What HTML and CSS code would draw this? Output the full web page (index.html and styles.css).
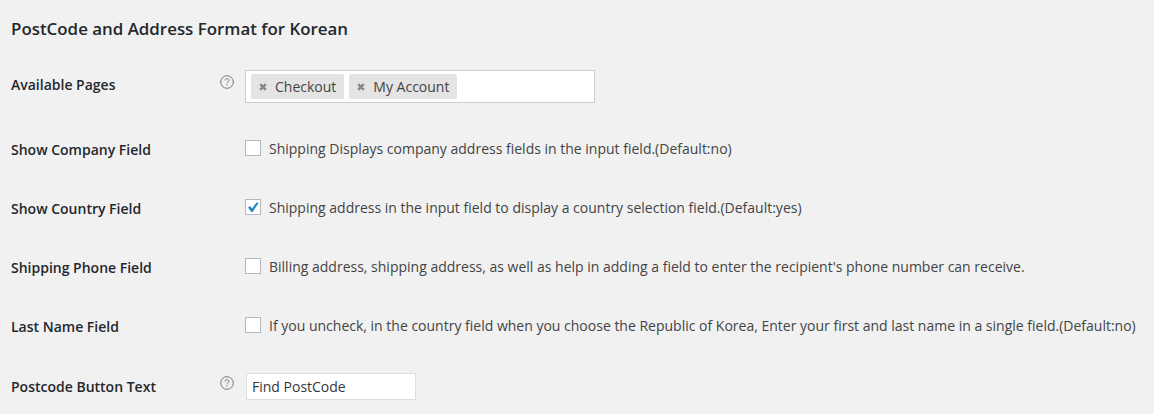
FILE: index.html
```
<!DOCTYPE html>
<html lang="en">
<head>
<meta charset="utf-8">
<title>PostCode and Address Format for Korean</title>
<link rel="stylesheet" href="styles.css">
</head>
<body>
<main class="settings">
  <h3 class="title">PostCode and Address Format for Korean</h3>
  <div class="row row-pages">
    <span class="label">Available Pages</span>
    <svg class="help" viewBox="0 0 14 14"><circle cx="7" cy="7" r="6.3"/><path d="M5 5.6C5 4.3 5.9 3.7 7 3.7s2 .6 2 1.7c0 1.3-2 1.5-2 2.9M7 9.4v1.2"/></svg>
    <div class="select">
      <span class="chip"><svg class="remove" viewBox="0 0 8 8"><path d="M1.2 1.2l5.6 5.6M6.8 1.2L1.2 6.8"/></svg>Checkout</span>
      <span class="chip"><svg class="remove" viewBox="0 0 8 8"><path d="M1.2 1.2l5.6 5.6M6.8 1.2L1.2 6.8"/></svg>My Account</span>
    </div>
  </div>
  <div class="row">
    <span class="label">Show Company Field</span>
    <span class="box"></span>
    <span class="text">Shipping Displays company address fields in the input field.(Default:no)</span>
  </div>
  <div class="row">
    <span class="label">Show Country Field</span>
    <span class="box"><svg class="tick" viewBox="0 0 14 14"><path d="M2 7.4l2-1.3 2 2.3L10.8 2.2l1.7 1L6.6 11.9H5.3z"/></svg></span>
    <span class="text">Shipping address in the input field to display a country selection field.(Default:yes)</span>
  </div>
  <div class="row">
    <span class="label">Shipping Phone Field</span>
    <span class="box"></span>
    <span class="text">Billing address, shipping address, as well as help in adding a field to enter the recipient's phone number can receive.</span>
  </div>
  <div class="row">
    <span class="label">Last Name Field</span>
    <span class="box"></span>
    <span class="text">If you uncheck, in the country field when you choose the Republic of Korea, Enter your first and last name in a single field.(Default:no)</span>
  </div>
  <div class="row row-button">
    <span class="label">Postcode Button Text</span>
    <svg class="help" viewBox="0 0 14 14"><circle cx="7" cy="7" r="6.3"/><path d="M5 5.6C5 4.3 5.9 3.7 7 3.7s2 .6 2 1.7c0 1.3-2 1.5-2 2.9M7 9.4v1.2"/></svg>
    <div class="input">Find PostCode</div>
  </div>
</main>
</body>
</html>
```
FILE: styles.css
```
* { box-sizing: border-box; }
body {
  margin: 0;
  height: 414px;
  overflow: hidden;
  background: #f1f1f1;
  color: #444;
  font: 14px/20px "Open Sans", sans-serif;
}
.settings { padding: 19px 0 0 11px; }
.title {
  margin: 0;
  height: 38px;
  font-size: 16.9px;
  line-height: 20px;
  font-weight: 600;
  color: #23282d;
  white-space: nowrap;
}
.row {
  display: grid;
  grid-template-columns: 209px 25px 24px 1fr;
  height: 59px;
  align-items: center;
  white-space: nowrap;
}
.label { grid-column: 1; padding-top: 2px; font-weight: 600; color: #23282d; }
.box {
  grid-column: 3;
  width: 16px;
  height: 16px;
  margin-bottom: 2px;
  border: 1px solid #b4b9be;
  background: #fff;
}
.text { grid-column: 4; }
.row-pages { height: 58px; margin-bottom: 4px; }
.row-pages .label { padding: 0 0 2px; }
.help { grid-column: 2; width: 14px; height: 14px; margin-bottom: 9px; fill: none; stroke: #777; stroke-width: 1; }
.select {
  grid-column: 3 / 5;
  display: flex;
  gap: 5px;
  width: 350px;
  height: 33px;
  padding: 3px 5px;
  border: 1px solid #ccc;
  background: #fff;
}
.chip {
  display: flex;
  align-items: center;
  height: 25px;
  padding: 1px 8px 0;
  background: #e4e4e4;
  border-radius: 2px;
}
.remove { width: 8px; height: 8px; margin-right: 8px; stroke: #888; stroke-width: 2.4; }
.tick { display: block; width: 14px; height: 14px; fill: #1e8cbe; }
.row-button { height: 63px; }
.row-button .label { padding-top: 1px; }
.row-button .help { margin-bottom: 7px; }
.input {
  grid-column: 3 / 5;
  width: 170px;
  height: 27px;
  margin-left: 1px;
  padding: 3px 5px 2px;
  border: 1px solid #ddd;
  background: #fff;
  color: #32373c;
}
```
